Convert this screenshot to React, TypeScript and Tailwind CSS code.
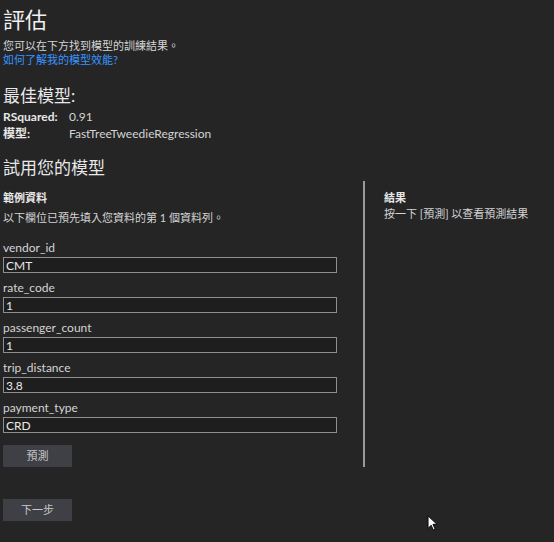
import React from "react";

const FIELDS = [
  {name: "vendor_id", value: "CMT"},
  {name: "rate_code", value: "1"},
  {name: "passenger_count", value: "1"},
  {name: "trip_distance", value: "3.8"},
  {name: "payment_type", value: "CRD"},
];

const font = {fontFamily: 'Lato, "Noto Sans CJK TC", sans-serif'};

export default function App() {
  return (
    <div
      className="relative h-[542px] w-[554px] overflow-hidden bg-[#252526] pl-[3px] text-[#d4d4d4]"
      style={font}
    >
      <h1 className="pt-[5px] text-[22px] leading-[30px] text-[#f0f0f0]">評估</h1>
      <p className="mt-[4px] text-[11px] leading-[14px]">您可以在下方找到模型的訓練結果。</p>
      <a className="block text-[11px] leading-[13px] text-[#3794ff]" href="#">
        如何了解我的模型效能?
      </a>

      <h2 className="mt-[18px] text-[17px] leading-[24px] text-[#e8e8e8]">最佳模型:</h2>
      <div className="mt-[2px] grid grid-cols-[66px_1fr] gap-y-[3px] text-[12px] leading-[14px]">
        <span className="font-bold text-[#e8e8e8]">RSquared:</span>
        <span>0.91</span>
        <span className="font-bold text-[#e8e8e8]">模型:</span>
        <span>FastTreeTweedieRegression</span>
      </div>

      <h2 className="mt-[15px] text-[17px] leading-[24px] text-[#e8e8e8]">試用您的模型</h2>

      <div className="mt-[1px] flex">
        <div className="w-[360px] pt-[10px]">
          <h3 className="text-[11px] font-bold leading-[14px] text-[#e8e8e8]">範例資料</h3>
          <p className="mt-[6px] text-[11px] leading-[14px]">以下欄位已預先填入您資料的第 1 個資料列。</p>
          <div className="mt-[13px] flex flex-col gap-[5px]">
            {FIELDS.map((f) => (
              <label key={f.name} className="flex flex-col">
                <span className="text-[12px] leading-[19px]">{f.name}</span>
                <input
                  readOnly
                  className="h-[16px] w-[334px] border border-[#8f8f8f] bg-[#1e1e1e] px-[2px] text-[12px] leading-[14px] text-[#e8e8e8] outline-none"
                  value={f.value}
                />
              </label>
            ))}
          </div>
          <button className="mt-[12px] h-[22px] w-[69px] bg-[#3f3f46] text-[11px] text-[#c8c8c8]">
            預測
          </button>
        </div>
        <div className="w-[2px] bg-[#9a9a9a]" />
        <div className="pl-[19px] pt-[10px]">
          <h3 className="text-[11px] font-bold leading-[14px] text-[#e8e8e8]">結果</h3>
          <p className="mt-[2px] text-[11px] leading-[14px]">按一下 [預測] 以查看預測結果</p>
        </div>
      </div>

      <button className="mt-[32px] h-[22px] w-[69px] bg-[#3f3f46] text-[11px] text-[#c8c8c8]">
        下一步
      </button>

      {/* mouse pointer */}
      <svg
        className="absolute left-[427px] top-[515px]"
        height="16"
        viewBox="0 0 12 18"
        width="11"
      >
        <path d="M1 1 L1 15 L4.5 11.5 L7 17 L9 16 L6.5 10.5 L11 10.5 Z" fill="#fff" stroke="#000" strokeWidth="1" />
      </svg>
    </div>
  );
}
